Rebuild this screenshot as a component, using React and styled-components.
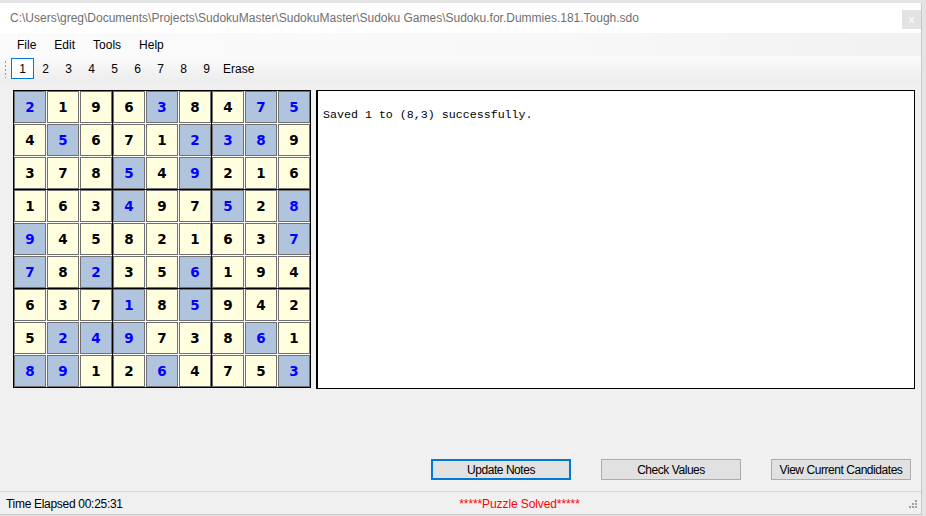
import styled, { createGlobalStyle } from "styled-components";

const GlobalStyle = createGlobalStyle`
  html, body {
    margin: 0;
    padding: 0;
    background: #e4e4e4;
    overflow: hidden;
  }
`;

const UI_FONT = `"Liberation Sans", Arial, sans-serif`;

const Window = styled.div`
  margin-top: 3px;
  width: 921px;
  height: 511px;
  display: flex;
  flex-direction: column;
  background: #f0f0f0;
  border-right: 1px solid #c9c9c9;
  border-bottom: 1px solid #c9c9c9;
  font-family: ${UI_FONT};
  font-size: 12px;
  color: #000;
`;

const TitleBar = styled.div`
  height: 30px;
  display: flex;
  align-items: center;
  justify-content: space-between;
  background: #fff;
  padding-left: 10px;
`;

const TitleText = styled.span`
  color: #6f6f6f;
  font-size: 12px;
  white-space: nowrap;
`;

const CloseButton = styled.div`
  width: 19px;
  height: 19px;
  margin-top: 2px;
  background: #e3e3e3;
  color: #fff;
  font-size: 11px;
  display: flex;
  align-items: center;
  justify-content: center;
`;

const MenuBar = styled.div`
  height: 23px;
  display: flex;
  align-items: center;
  padding-left: 8px;
  background: linear-gradient(to right, #fbfbfb 0%, #f8f8f8 60%, #f1f1f1 100%);
`;

const MenuItem = styled.span`
  padding: 0 9px;
`;

const ToolStrip = styled.div`
  height: 25px;
  display: flex;
  align-items: center;
  padding-left: 4px;
  background: linear-gradient(to bottom, #fbfbfb, #ededed);
`;

const Grip = styled.div`
  width: 3px;
  height: 18px;
  margin-right: 4px;
  background-image: radial-gradient(circle, #9a9a9a 0.8px, transparent 1px);
  background-size: 3px 4px;
`;

const ToolButton = styled.div`
  width: 23px;
  height: 21px;
  box-sizing: border-box;
  display: flex;
  align-items: center;
  justify-content: center;
  border: 1px solid ${(p) => (p.$active ? "#0078d7" : "transparent")};
  background: ${(p) => (p.$active ? "#fff" : "transparent")};
`;

const EraseButton = styled(ToolButton)`
  width: auto;
  padding: 0 4px;
`;

const Main = styled.div`
  flex: 1;
  display: flex;
  flex-direction: column;
  padding: 9px 6px 11px 13px;
`;

const Workspace = styled.div`
  display: flex;
  gap: 5px;
`;

const Board = styled.div`
  display: grid;
  grid-template-columns: repeat(3, auto);
  gap: 1px;
  background: #000;
  border: 1px solid #000;
  align-self: flex-start;
`;

const Box = styled.div`
  display: grid;
  grid-template-columns: repeat(3, 32px);
  gap: 1px;
  background: #fbfbfb;
`;

const Cell = styled.div`
  width: 32px;
  height: 32px;
  box-sizing: border-box;
  border: 1px solid #707070;
  display: flex;
  align-items: center;
  justify-content: center;
  background: ${(p) => (p.$given ? "#b0c4de" : "#ffffe0")};
  color: ${(p) => (p.$given ? "#0000ff" : "#000")};
  font-family: "DejaVu Sans", Verdana, sans-serif;
  font-weight: bold;
  font-size: 13.5px;
`;

const MessageBox = styled.div`
  flex: 1;
  height: 299px;
  box-sizing: border-box;
  background: #fff;
  border: 1px solid #000;
  border-left-width: 2px;
  padding: 17px 5px;
  font-family: "Liberation Mono", "DejaVu Sans Mono", monospace;
  font-size: 11.65px;
`;

const ButtonRow = styled.div`
  margin-top: auto;
  display: flex;
  justify-content: flex-end;
  gap: 30px;
  padding-right: 4px;
`;

const Button = styled.div`
  width: 140px;
  height: 21px;
  box-sizing: border-box;
  display: flex;
  align-items: center;
  justify-content: center;
  background: #e1e1e1;
  border: ${(p) => (p.$focused ? "2px solid #0078d7" : "1px solid #adadad")};
  letter-spacing: -0.45px;
`;

const StatusBar = styled.div`
  height: 23px;
  display: flex;
  align-items: center;
  border-top: 1px solid #d7d7d7;
  padding-left: 6px;
  padding-top: 2px;
  box-sizing: border-box;
`;

const StatusLabel = styled.span`
  width: 127px;
  white-space: nowrap;
  letter-spacing: -0.3px;
`;

const SolvedLabel = styled.span`
  flex: 1;
  text-align: center;
  white-space: nowrap;
  color: #ff0000;
  letter-spacing: -0.1px;
`;

const SizeGrip = styled.svg`
  width: 12px;
  height: 12px;
  margin: 0 3px 3px 0;
  align-self: flex-end;
`;

const puzzle = [
  "2b 1 9 6 3b 8 4 7b 5b",
  "4 5b 6 7 1 2b 3b 8b 9",
  "3 7 8 5b 4 9b 2 1 6",
  "1 6 3 4b 9 7 5b 2 8b",
  "9b 4 5 8 2 1 6 3 7b",
  "7b 8 2b 3 5 6b 1 9 4",
  "6 3 7 1b 8 5b 9 4 2",
  "5 2b 4b 9b 7 3 8 6b 1",
  "8b 9b 1 2 6b 4 7 5 3b",
].map((row) =>
  row.split(" ").map((v) => ({ value: v[0], given: v.length > 1 }))
);

const boxes = [0, 1, 2, 3, 4, 5, 6, 7, 8].map((b) => {
  const r0 = Math.floor(b / 3) * 3;
  const c0 = (b % 3) * 3;
  const cells = [];
  for (let r = r0; r < r0 + 3; r++) {
    for (let c = c0; c < c0 + 3; c++) cells.push(puzzle[r][c]);
  }
  return cells;
});

const App = () => {
  return (
    <Window>
      <GlobalStyle />
      <TitleBar>
        <TitleText>
          C:\Users\greg\Documents\Projects\SudokuMaster\SudokuMaster\Sudoku
          Games\Sudoku.for.Dummies.181.Tough.sdo
        </TitleText>
        <CloseButton>x</CloseButton>
      </TitleBar>
      <MenuBar>
        <MenuItem>File</MenuItem>
        <MenuItem>Edit</MenuItem>
        <MenuItem>Tools</MenuItem>
        <MenuItem>Help</MenuItem>
      </MenuBar>
      <ToolStrip>
        <Grip />
        {[1, 2, 3, 4, 5, 6, 7, 8, 9].map((n) => (
          <ToolButton key={n} $active={n === 1}>
            {n}
          </ToolButton>
        ))}
        <EraseButton>Erase</EraseButton>
      </ToolStrip>
      <Main>
        <Workspace>
          <Board>
            {boxes.map((cells, i) => (
              <Box key={i}>
                {cells.map((cell, j) => (
                  <Cell key={j} $given={cell.given}>
                    {cell.value}
                  </Cell>
                ))}
              </Box>
            ))}
          </Board>
          <MessageBox>Saved 1 to (8,3) successfully.</MessageBox>
        </Workspace>
        <ButtonRow>
          <Button $focused>Update Notes</Button>
          <Button>Check Values</Button>
          <Button>View Current Candidates</Button>
        </ButtonRow>
      </Main>
      <StatusBar>
        <StatusLabel>Time Elapsed 00:25:31</StatusLabel>
        <SolvedLabel>*****Puzzle Solved*****</SolvedLabel>
        <SizeGrip viewBox="0 0 12 12">
          {[
            [9, 1],
            [6, 4],
            [9, 4],
            [3, 7],
            [6, 7],
            [9, 7],
          ].map(([x, y], i) => (
            <rect key={i} x={x} y={y} width="2" height="2" fill="#a0a0a0" />
          ))}
        </SizeGrip>
      </StatusBar>
    </Window>
  );
};

export default App;
